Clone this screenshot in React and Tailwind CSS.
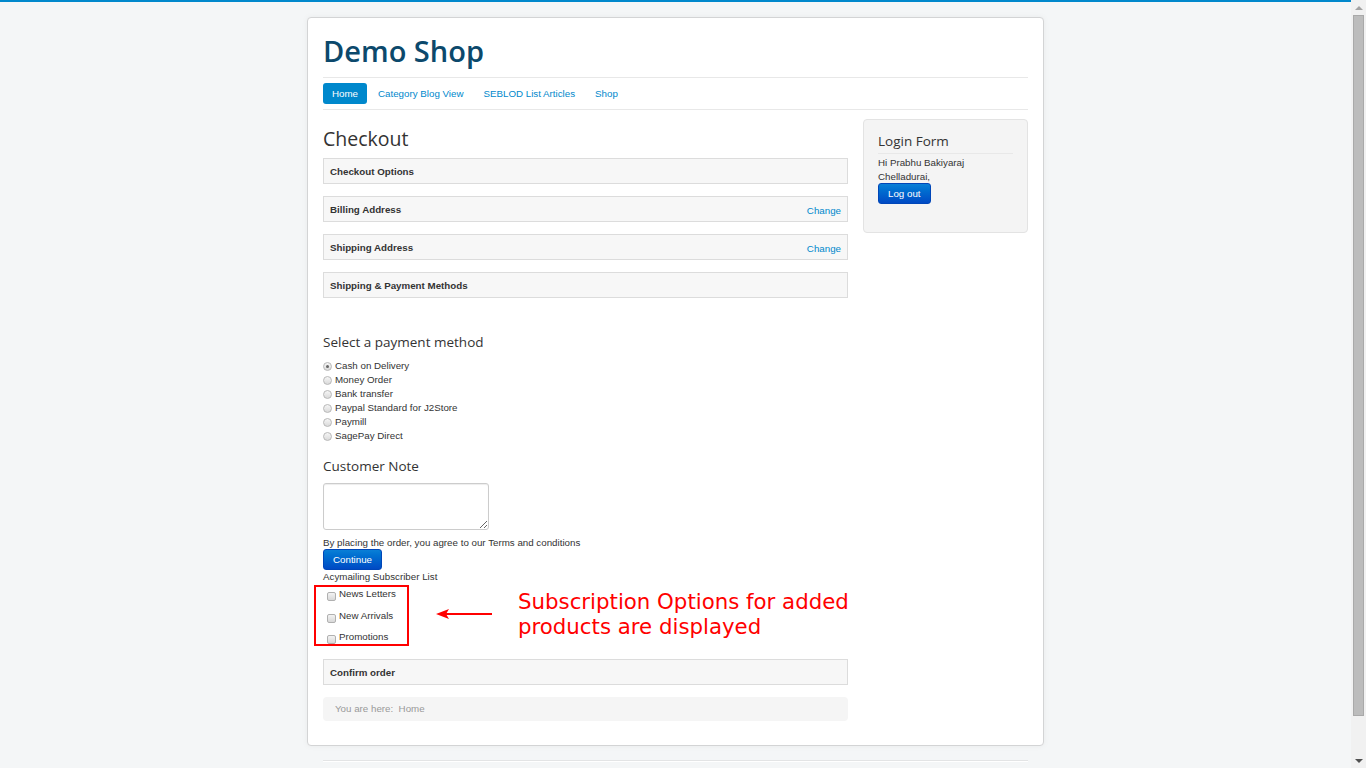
import React from 'react';

const panels = [
  { title: 'Checkout Options' },
  { title: 'Billing Address', change: true },
  { title: 'Shipping Address', change: true },
  { title: 'Shipping & Payment Methods' },
];

const payments = [
  'Cash on Delivery',
  'Money Order',
  'Bank transfer',
  'Paypal Standard for J2Store',
  'Paymill',
  'SagePay Direct',
];

const lists = ['News Letters', 'New Arrivals', 'Promotions'];

function Panel({ title, change }) {
  return (
    <div className="h-[26px] mb-[12px] border border-[#dcdcdc] bg-[#f7f7f7] flex items-center justify-between px-[6px] pt-[1px]">
      <span className="font-bold text-[#333]">{title}</span>
      {change && <span className="text-[#0088cc] mt-[2px]">Change</span>}
    </div>
  );
}

function BlueButton({ children }) {
  return (
    <button className="h-[21px] px-[9px] rounded-[3px] border border-[#0046b8] bg-gradient-to-b from-[#0a7fd6] to-[#0049c4] text-white leading-none">
      {children}
    </button>
  );
}

function Radio({ checked }) {
  return (
    <span className="w-[9px] h-[9px] mt-[3px] rounded-full border border-[#b8b8b8] bg-gradient-to-b from-[#f6f6f6] to-[#dadada] flex items-center justify-center shrink-0">
      {checked && <span className="w-[3px] h-[3px] rounded-full bg-[#666]" />}
    </span>
  );
}

function Scrollbar() {
  return (
    <div className="w-[15px] h-screen bg-[#f1f1f1] flex flex-col items-center shrink-0">
      <div className="h-[15px] flex items-center justify-center">
        <span className="w-0 h-0 border-l-[4px] border-r-[4px] border-b-[4px] border-l-transparent border-r-transparent border-b-[#a3a3a3]" />
      </div>
      <div className="w-[11px] flex-1 bg-[#bcbcbc] border border-[#a9a9a9]" />
      <div className="h-[52px] flex items-end justify-center pb-[5px]">
        <span className="w-0 h-0 border-l-[4px] border-r-[4px] border-t-[4px] border-l-transparent border-r-transparent border-t-[#505050]" />
      </div>
    </div>
  );
}

export default function App() {
  return (
    <div className="h-screen overflow-hidden flex bg-[#f4f6f7] text-[9.75px] leading-[14px] text-[#333] font-['Liberation_Sans',Arial,sans-serif]">
      <div className="flex-1 border-t-2 border-[#0088cc] pt-[15px] pb-[30px]">
        <div className="relative mx-auto w-[737px] bg-white border border-[#d3d4d5] rounded-[4px] shadow-[0_0_6px_rgba(0,0,0,0.05)] px-[15px] pt-[15px] pb-[24px]">
          {/* header */}
          <div className="pb-[8px] border-b border-[#e8e8e8]">
            <h1 className="font-['Open_Sans',sans-serif] text-[29px] leading-[36px] text-[#0c496c] font-semibold">Demo Shop</h1>
          </div>
          <div className="flex gap-[2px] py-[5px] border-b border-[#e8e8e8]">
            <span className="h-[21px] px-[9px] rounded-[3px] bg-[#0088cc] text-white flex items-center">Home</span>
            <span className="h-[21px] px-[9px] text-[#0088cc] flex items-center">Category Blog View</span>
            <span className="h-[21px] px-[9px] text-[#0088cc] flex items-center">SEBLOD List Articles</span>
            <span className="h-[21px] px-[9px] text-[#0088cc] flex items-center">Shop</span>
          </div>

          <div className="flex gap-[15px] mt-[9px]">
            {/* main */}
            <div className="w-[525px]">
              <h2 className="font-['Open_Sans',sans-serif] text-[19.5px] leading-[24px] mt-[8px] mb-[7px] text-[#333]">Checkout</h2>
              {panels.map(p => <Panel key={p.title} {...p} />)}

              <h3 className="font-['Open_Sans',sans-serif] text-[13.5px] leading-[20px] mt-[34px] mb-[7px] text-[#333]">Select a payment method</h3>
              <div>
                {payments.map((p, i) => (
                  <div key={p} className="flex items-start gap-[3px]">
                    <Radio checked={i === 0} />
                    <span>{p}</span>
                  </div>
                ))}
              </div>

              <h3 className="font-['Open_Sans',sans-serif] text-[13.5px] leading-[20px] mt-[13px] mb-[7px] text-[#333]">Customer Note</h3>
              <textarea className="block w-[166px] h-[47px] border border-[#cccccc] rounded-[3px] shadow-[inset_0_1px_1px_rgba(0,0,0,0.075)] mb-[5px] outline-none" />
              <div className="pt-[1px] -mb-[1px]">By placing the order, you agree to our Terms and conditions</div>
              <BlueButton>Continue</BlueButton>
              <div>Acymailing Subscriber List</div>
              <div className="pl-[4px] mt-[3px]">
                {lists.map(l => (
                  <div key={l} className="flex items-start gap-[3px] h-[14px] mb-[7.5px]">
                    <span className="w-[9px] h-[9px] mt-[5px] rounded-[2px] border border-[#b0b0b0] bg-gradient-to-b from-[#f3f3f3] to-[#d8d8d8] shrink-0" />
                    <span>{l}</span>
                  </div>
                ))}
              </div>

              <div className="mt-[15px]">
                <Panel title="Confirm order" />
              </div>
              <div className="h-[24px] rounded-[4px] bg-[#f5f5f5] flex items-center px-[12px] text-[#999]">
                You are here:&nbsp; Home
              </div>
            </div>

            {/* sidebar */}
            <div className="w-[165px]">
              <div className="border border-[#e3e3e3] bg-[#f4f4f4] rounded-[4px] px-[14px] pt-[11px] pb-[28px]">
                <h3 className="font-['Open_Sans',sans-serif] text-[13.5px] leading-[20px] text-[#333]">Login Form</h3>
                <div className="border-t border-[#e8e8e8] mt-[2px] pt-[2px]">
                  <div>Hi Prabhu Bakiyaraj</div>
                  <div>Chelladurai,</div>
                  <div className="-mt-[1px]">
                    <BlueButton>Log out</BlueButton>
                  </div>
                </div>
              </div>
            </div>
          </div>

          {/* annotation overlay */}
          <div className="absolute left-[6px] top-[567px] w-[95px] h-[61px] border-2 border-[#ff0000]" />
          <svg className="absolute left-[128px] top-[590px]" width="57" height="12" viewBox="0 0 57 12">
            <polygon points="0,6 13,1 10,6 13,11" fill="#ff0000" />
            <line x1="9" y1="6" x2="56" y2="6" stroke="#ff0000" strokeWidth="2" />
          </svg>
          <div className="absolute left-[210px] top-[571px] font-['DejaVu_Sans',sans-serif] text-[21.3px] leading-[25px] text-[#ff0000]">
            Subscription Options for added<br />products are displayed
          </div>
        </div>
        <div className="mx-auto w-[705px] mt-[14px] border-t border-[#e3e4e5] border-b border-b-white" />
      </div>
      <Scrollbar />
    </div>
  );
}
